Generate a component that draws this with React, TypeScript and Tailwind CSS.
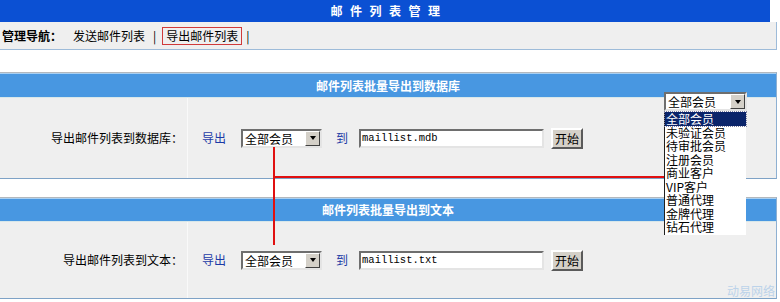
import React from "react";

const FONT = { fontFamily: '"Noto Sans CJK SC", "Liberation Sans", sans-serif' };

function Select({ w = 81 }: { w?: number }) {
  return (
    <div
      className="h-[19px] bg-white border-2 border-t-[#6e6e6e] border-l-[#6e6e6e] border-b-[#e4e4e4] border-r-[#e4e4e4] flex items-center justify-between"
      style={{ width: w }}
    >
      <span className="text-[12px] leading-[15px] pl-[2px] text-black">全部会员</span>
      <div className="w-[15px] h-[15px] bg-[#d4d0c8] border border-t-white border-l-white border-b-[#404040] border-r-[#404040] flex items-center justify-center">
        <div className="w-0 h-0 border-l-[3px] border-r-[3px] border-t-[4px] border-l-transparent border-r-transparent border-t-black" />
      </div>
    </div>
  );
}

function Row({ label, file }: { label: string; file: string }) {
  return (
    <div className="flex h-full">
      <div className="w-[188px] h-full flex items-center justify-end pr-[4px] border-r border-[#f9f9f9] text-[12px] text-black">
        {label}
      </div>
      <div className="flex items-center pl-[14px] text-[12px]">
        <span className="text-[#1c3aa6]">导出</span>
        <div className="ml-[15px]">
          <Select />
        </div>
        <span className="ml-[14px] text-[#1c3aa6]">到</span>
        <div className="ml-[11px] w-[185px] h-[19px] bg-white border-2 border-t-[#6e6e6e] border-l-[#6e6e6e] border-b-[#e4e4e4] border-r-[#e4e4e4] flex items-center">
          <span
            className="text-[10.5px] pl-[1px] text-black leading-[15px]"
            style={{ fontFamily: '"Liberation Mono", monospace' }}
          >
            {file}
          </span>
        </div>
        <button className="ml-[7px] w-[32px] h-[21px] bg-[#d4d0c8] border-2 border-t-white border-l-white border-b-[#5a5a5a] border-r-[#5a5a5a] text-[12px] leading-[15px] text-black flex items-center justify-center">
          开始
        </button>
      </div>
    </div>
  );
}

function Section({
  title,
  headerH,
  bodyH,
  children,
}: {
  title: string;
  headerH: number;
  bodyH: number;
  children: React.ReactNode;
}) {
  return (
    <div className="w-[777px] border-t border-t-[#b3b8bd] border-r border-r-[#8eb0d2] border-b border-b-[#7ea2c6]">
      <div className="h-[1px] bg-[#a9d0f2]" />
      <div
        className="bg-[#4897e1] flex items-center justify-center text-white font-bold text-[12px]"
        style={{ height: headerH }}
      >
        {title}
      </div>
      <div className="h-[1px] bg-[#d7e7ea]" />
      <div className="bg-[#efefef]" style={{ height: bodyH }}>
        {children}
      </div>
    </div>
  );
}

const options = ["全部会员", "未验证会员", "待审批会员", "注册会员", "商业客户", "VIP客户", "普通代理", "金牌代理", "钻石代理"];

export default function App() {
  return (
    <div className="relative w-[780px] h-[302px] overflow-hidden bg-white" style={FONT}>
      <div className="w-[770px] h-[22px] bg-[#0b50d3] flex items-center justify-center text-white font-bold text-[12px] tracking-[7.5px] pl-[8px]">
        邮件列表管理
      </div>
      <div className="w-[777px] h-[28px] bg-[#efefef] border-r border-b border-[#9dbbd9] flex items-center pl-[2px] text-[12px] text-black">
        <span className="font-bold">管理导航：</span>
        <span className="ml-[11px]">发送邮件列表</span>
        <span className="ml-[8px] text-black">|</span>
        <span className="ml-[6px] border border-[#d03a3a] px-[3px] h-[18px] flex items-center">导出邮件列表</span>
        <span className="ml-[4px] text-black">|</span>
      </div>

      <div className="mt-[22px]">
        <Section title="邮件列表批量导出到数据库" headerH={23} bodyH={80}>
          <Row label="导出邮件列表到数据库：" file="maillist.mdb" />
        </Section>
      </div>

      <div className="mt-[18px]">
        <Section title="邮件列表批量导出到文本" headerH={22} bodyH={76}>
          <Row label="导出邮件列表到文本：" file="maillist.txt" />
        </Section>
      </div>

      {/* red annotation lines */}
      <div className="absolute left-[273px] top-[147px] w-[2px] h-[98px] bg-[#e01010]" />
      <div className="absolute left-[273px] top-[176px] w-[391px] h-[2px] bg-[#e01010]" />

      {/* opened dropdown overlay */}
      <div className="absolute left-[664px] top-[92px]">
        <Select w={83} />
        <div className="w-[82px] bg-white border-l border-l-[#202020] pt-[1px] pb-[1px]">
          {options.map((o, i) => (
            <div
              key={o}
              className={
                "h-[13.5px] flex items-center pl-[1px] " +
                (i === 0 ? "bg-[#0a246a] text-white outline-1 outline-dotted outline-[#8080a0]" : "text-black")
              }
            >
              <span className="text-[12px] leading-[13px]">{o}</span>
            </div>
          ))}
        </div>
      </div>

      <div className="absolute left-[727px] top-[284px] text-[12px] leading-[14px] text-[#bcd3ea]">动易网络</div>
    </div>
  );
}
